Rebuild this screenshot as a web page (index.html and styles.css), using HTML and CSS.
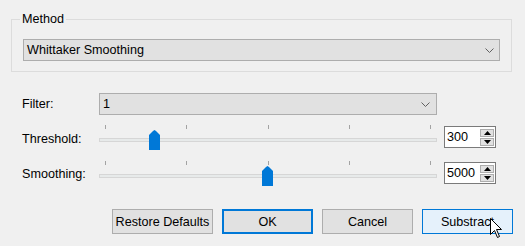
FILE: index.html
```html
<!DOCTYPE html>
<html>
<head>
<meta charset="utf-8">
<link rel="stylesheet" href="styles.css">
</head>
<body>
<div class="dialog">
  <div class="group">
    <span class="group-title">Method</span>
    <div class="combo combo-method">
      <span>Whittaker Smoothing</span>
      <svg class="chev" width="9" height="5" viewBox="0 0 9 5"><path d="M0.5 0.5 L4.5 4.5 L8.5 0.5" fill="none" stroke="#606060" stroke-width="1"/></svg>
    </div>
  </div>

  <div class="form">
    <div class="row row-filter">
      <label class="lbl">Filter:</label>
      <div class="combo combo-filter">
        <span>1</span>
        <svg class="chev" width="9" height="5" viewBox="0 0 9 5"><path d="M0.5 0.5 L4.5 4.5 L8.5 0.5" fill="none" stroke="#606060" stroke-width="1"/></svg>
      </div>
    </div>

    <div class="row row-slider row-threshold">
      <label class="lbl lbl-slider">Threshold:</label>
      <div class="slider">
        <div class="ticks"><i></i><i></i><i></i><i></i><i></i></div>
        <div class="track"></div>
        <svg class="thumb thumb-threshold" width="11" height="20" viewBox="0 0 11 20"><path d="M0 5 L4 1 L5.5 0 L7 1 L11 5 L11 20 L0 20 Z" fill="#0078d7"/></svg>
      </div>
      <div class="spin">
        <span class="spin-val">300</span>
        <div class="spin-btns">
          <div class="sb"><svg width="7" height="4" viewBox="0 0 7 4"><path d="M3.5 0 L7 4 L0 4 Z" fill="#000"/></svg></div>
          <div class="sb"><svg width="7" height="4" viewBox="0 0 7 4"><path d="M0 0 L7 0 L3.5 4 Z" fill="#000"/></svg></div>
        </div>
      </div>
    </div>

    <div class="row row-slider row-smoothing">
      <label class="lbl lbl-slider">Smoothing:</label>
      <div class="slider">
        <div class="ticks"><i></i><i></i><i></i><i></i><i></i></div>
        <div class="track"></div>
        <svg class="thumb thumb-smoothing" width="11" height="20" viewBox="0 0 11 20"><path d="M0 5 L4 1 L5.5 0 L7 1 L11 5 L11 20 L0 20 Z" fill="#0078d7"/></svg>
      </div>
      <div class="spin">
        <span class="spin-val">5000</span>
        <div class="spin-btns">
          <div class="sb"><svg width="7" height="4" viewBox="0 0 7 4"><path d="M3.5 0 L7 4 L0 4 Z" fill="#000"/></svg></div>
          <div class="sb"><svg width="7" height="4" viewBox="0 0 7 4"><path d="M0 0 L7 0 L3.5 4 Z" fill="#000"/></svg></div>
        </div>
      </div>
    </div>
  </div>

  <div class="buttons">
    <button class="btn btn-wide">Restore Defaults</button>
    <button class="btn btn-default">OK</button>
    <button class="btn">Cancel</button>
    <button class="btn btn-hover">Substract</button>
  </div>

  <svg class="cursor" width="13" height="21" viewBox="0 0 13 21"><path d="M0.5 0.5 L0.5 16.5 L4.5 12.5 L7.5 19.5 L9.5 18.5 L6.5 11.5 L11.5 11.5 Z" fill="#fff" stroke="#000" stroke-width="1" stroke-linejoin="miter"/></svg>
</div>
</body>
</html>
```

FILE: styles.css
```css
* { box-sizing: border-box; }
html, body {
  margin: 0;
  padding: 0;
  background: #f0f0f0;
}
body {
  font-family: "Liberation Sans", Arial, sans-serif;
  font-size: 12.6px;
  color: #000;
  width: 525px;
  height: 246px;
  overflow: hidden;
}
.dialog {
  position: relative;
  padding-top: 19px;
}
.group {
  position: relative;
  margin: 0 13px 0 11px;
  height: 53px;
  border: 1px solid #dcdcdc;
  padding: 19px 11px 0 11px;
}
.group-title {
  position: absolute;
  top: -8px;
  left: 8px;
  padding: 0 2px;
  line-height: 14px;
  background: #f0f0f0;
}
.combo {
  height: 22px;
  border: 1px solid #adadad;
  background: #e1e1e1;
  display: flex;
  align-items: center;
  justify-content: space-between;
  padding: 0 5px 0 3px;
  line-height: 14px;
}
.combo-filter { padding-right: 6px; }
.chev { display: block; }

.form {
  margin-top: 21px;
  padding-left: 22px;
}
.row {
  display: grid;
  grid-template-columns: 77px 338px 59px;
  align-items: start;
}
.row-threshold { margin-top: 10px; }
.row-smoothing { margin-top: 11px; }
.lbl {
  line-height: 14px;
  padding-top: 4px;
}
.lbl-slider { padding-top: 7px; }
.row-smoothing .lbl-slider { padding-top: 6px; }

.slider {
  position: relative;
  height: 25px;
}
.ticks {
  display: flex;
  justify-content: space-between;
  padding: 0 6px;
  height: 4px;
}
.ticks i {
  display: block;
  width: 1px;
  height: 4px;
  background: #a3a3a3;
}
.track {
  margin-top: 9px;
  height: 4px;
  border: 1px solid #d6d6d6;
  background: #e7eaea;
}
.thumb {
  position: absolute;
  top: 5px;
  display: block;
}
.thumb-threshold { left: 50px; }
.thumb-smoothing { left: 163px; }

.spin {
  margin: 1px 0 0 7px;
  height: 22px;
  border: 1px solid #7a7a7a;
  background: #fff;
  display: flex;
  align-items: center;
  justify-content: space-between;
  padding: 0 1px 0 2px;
}
.spin-val { line-height: 14px; }
.spin-btns {
  display: flex;
  flex-direction: column;
  gap: 1px;
}
.sb {
  width: 14px;
  height: 8px;
  border: 1px solid #adadad;
  background: #e1e1e1;
  display: flex;
  align-items: center;
  justify-content: center;
}
.sb svg { display: block; }

.buttons {
  display: flex;
  justify-content: flex-end;
  gap: 9px;
  margin-top: 23px;
  margin-right: 12px;
}
.btn {
  width: 91px;
  height: 25px;
  border: 1px solid #adadad;
  background: #e1e1e1;
  font-family: inherit;
  font-size: 12.6px;
  color: #000;
  padding: 0;
  margin: 0;
  border-radius: 0;
}
.btn-wide { width: 101px; }
.btn-default { border: 2px solid #0078d7; }
.btn-hover {
  border-color: #0078d7;
  background: #e5f1fb;
}
.cursor {
  position: absolute;
  left: 490px;
  top: 218px;
}
```
